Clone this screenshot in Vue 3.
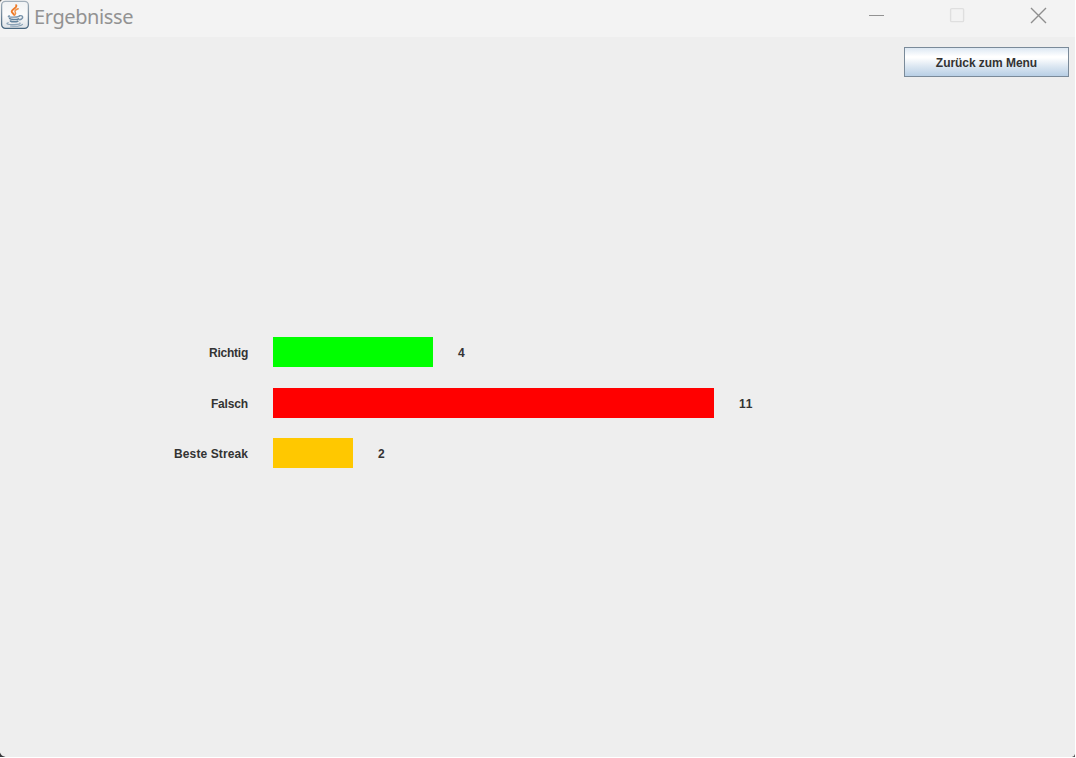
<script setup>
const results = [
  { label: 'Richtig', value: 4, width: 160, tone: 'green', spacing: -0.25 },
  { label: 'Falsch', value: 11, width: 441, tone: 'red', spacing: -0.15 },
  { label: 'Beste Streak', value: 2, width: 80, tone: 'orange', spacing: 0.1 },
]
</script>

<template>
  <div class="window">
    <header class="titlebar">
      <svg class="logo" width="30" height="30" viewBox="0 0 30 30">
        <defs>
          <linearGradient id="tile" x1="0" y1="0" x2="0" y2="1">
            <stop offset="0" stop-color="#f0f2f4" />
            <stop offset="0.5" stop-color="#fbfbfb" />
            <stop offset="1" stop-color="#dde2e7" />
          </linearGradient>
          <linearGradient id="rim" x1="0" y1="0" x2="0" y2="1">
            <stop offset="0" stop-color="#a3afba" />
            <stop offset="1" stop-color="#48667f" />
          </linearGradient>
        </defs>
        <rect x="1.6" y="1.4" width="26.8" height="27" rx="3.8" fill="url(#tile)" stroke="url(#rim)" stroke-width="1.3" />
        <g fill="none" stroke-linecap="round">
          <path d="M16.2 5.2c1.4 2.6-4.7 4-4.5 6.3 0 1.4 1.9 2.2 2.5 3.4" stroke="#ee7a28" stroke-width="1.9" />
          <path d="M18.2 8.8c-2.6 1-3.8 2-3 3.4 .6 1 .8 1.5-.2 2.4" stroke="#f09045" stroke-width="1.5" />
          <path d="M9.2 15.8c-2.4 1 .6 1.4 4.6 1.3 2 0 4-.3 5.4-.8" stroke="#7893aa" stroke-width="1.4" />
          <path d="M19.4 15.8c4.2-1 4.4 2.8.3 3.9" stroke="#7893aa" stroke-width="1.4" />
          <path d="M9.6 18.6c1 1.2 6.4 1.1 9 .3M10.4 21c1.6 1.1 5.6 1 7.4.2" stroke="#64849e" stroke-width="1.6" />
          <path d="M8.3 22.7c-4 1.2 1.1 2.1 6 1.9 4 0 6.6-.7 5.6-1.7M10.5 26c4 .5 10 .2 12-1.6" stroke="#8aa2b6" stroke-width="1.1" />
        </g>
      </svg>
      <h1 class="title">Ergebnisse</h1>
      <svg class="controls" width="180" height="18" viewBox="0 0 180 18" fill="none">
        <path d="M0 8.5h15" stroke="#929292" />
        <rect x="81.6" y="1.6" width="13" height="13" rx="1.2" stroke="#dfdfdf" stroke-width="1.4" />
        <path d="M162 1l15 15M177 1l-15 15" stroke="#8e8e8e" stroke-width="1.4" />
      </svg>
    </header>
    <div class="toolbar">
      <button class="menu-button" type="button">Zurück zum Menu</button>
    </div>
    <main class="chart">
      <div v-for="item in results" :key="item.label" class="row">
        <span class="label" :style="{ letterSpacing: item.spacing + 'px' }">{{ item.label }}</span>
        <div class="bar" :class="item.tone" :style="{ width: item.width + 'px' }"></div>
        <span class="value">{{ item.value }}</span>
      </div>
    </main>
    <svg class="corner left" width="6" height="6" viewBox="0 0 6 6"><path d="M0 0.5Q1 4 5.5 5H0z" fill="#36363a" /></svg>
    <svg class="corner right" width="4" height="4" viewBox="0 0 4 4"><path d="M3 0Q2.5 2.5 0 3H3z" fill="#4c4c4e" /></svg>
    <svg class="corner top" width="3" height="3" viewBox="0 0 3 3"><path d="M0 0h2.2Q.6.6 0 2.2z" fill="#555" /></svg>
  </div>
</template>

<style>
html,
body {
  margin: 0;
  background: #fff;
}
</style>

<style scoped>
.window {
  position: relative;
  width: 1075px;
  height: 757px;
  overflow: hidden;
  background: #eeeeee;
  color: #333;
  font: bold 12px/14px "Liberation Sans", Arial, sans-serif;
  font-kerning: none;
}
.titlebar {
  display: flex;
  align-items: flex-start;
  height: 37px;
  background: #f3f3f3;
}
.logo {
  flex: none;
}
.title {
  margin: 3px 0 0 4px;
  font: 400 20px/28px "Noto Sans", "Open Sans", sans-serif;
  letter-spacing: -0.4px;
  color: #929292;
}
.controls {
  margin: 7px 26px 0 auto;
}
.toolbar {
  display: flex;
  justify-content: flex-end;
  padding: 10px 6px 0 0;
}
.menu-button {
  box-sizing: border-box;
  width: 165px;
  height: 30px;
  padding: 1px 0 0;
  border: 1px solid #7a8a99;
  border-radius: 0;
  background: linear-gradient(#dde8f3 0%, #ffffff 30%, #ffffff 35%, #dce7f2 65%, #b8cfe5 100%);
  color: #333;
  font: inherit;
  letter-spacing: -0.05px;
}
.chart {
  display: flex;
  flex-direction: column;
  gap: 20.5px;
  padding-top: 260px;
}
.row {
  display: flex;
  align-items: center;
  height: 30px;
}
.label {
  width: 248px;
  margin-right: 25px;
  padding-top: 2px;
  text-align: right;
}
.bar {
  height: 30px;
}
.green {
  background: #00ff00;
}
.red {
  background: #ff0000;
}
.orange {
  background: #ffc800;
}
.value {
  margin-left: 25px;
  padding-top: 2px;
  font-kerning: none;
}
.corner {
  position: absolute;
}
.left {
  left: 0;
  bottom: -1px;
}
.right {
  right: -1px;
  bottom: -1px;
}
.top {
  left: 0;
  top: 0;
}
</style>
